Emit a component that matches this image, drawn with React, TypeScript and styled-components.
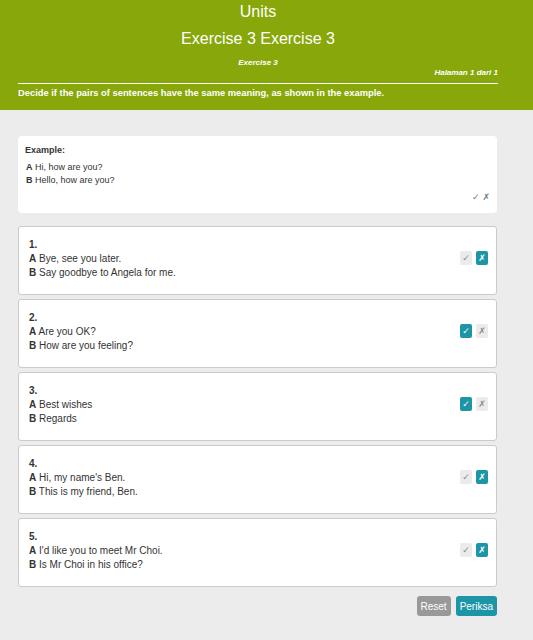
import React from "react";
import styled, { createGlobalStyle } from "styled-components";

const Global = createGlobalStyle`
  html, body { margin: 0; padding: 0; background: #ececec; }
  body { font-family: "Liberation Sans", Arial, sans-serif; color: #333; }
`;

const Page = styled.div`
  width: 533px;
  min-height: 640px;
  background: #ececec;
`;

const Header = styled.header`
  background: #87a70a;
  color: #fff;
  padding: 1px 0 11px;
`;

const HeaderInner = styled.div`
  width: 480px;
  margin-left: 18px;
  display: flex;
  flex-direction: column;
`;

const Title = styled.h1`
  margin: 0;
  font-size: 16px;
  font-weight: normal;
  line-height: 22px;
  text-align: center;
`;

const SubTitle = styled.h2`
  margin: 5px 0 0;
  font-size: 16px;
  font-weight: normal;
  line-height: 22px;
  text-align: center;
`;

const Small = styled.div<{ $align: "center" | "right"; $gap?: number }>`
  margin-top: ${(p) => p.$gap ?? 0}px;
  font-size: 8px;
  font-weight: bold;
  font-style: italic;
  line-height: 10px;
  text-align: ${(p) => p.$align};
`;

const Rule = styled.hr`
  margin: 5px 0 0;
  border: 0;
  height: 1px;
  background: #fff;
`;

const Instruction = styled.p`
  margin: 3px 0 0;
  font-size: 9.35px;
  font-weight: bold;
  line-height: 12px;
`;

const Main = styled.main`
  width: 479px;
  margin-left: 18px;
  padding-top: 26px;
  display: flex;
  flex-direction: column;
`;

const ExampleCard = styled.section`
  background: #fff;
  border-radius: 4px;
  padding: 8px 7px 10px;
  display: flex;
  flex-direction: column;
`;

const ExampleLabel = styled.div`
  font-size: 9px;
  font-weight: bold;
  line-height: 12px;
  margin-bottom: 5px;
`;

const ExampleLine = styled.div`
  font-size: 9px;
  line-height: 13px;
  padding-left: 1px;
`;

const ExampleMarks = styled.div`
  margin-top: 4px;
  display: flex;
  justify-content: flex-end;
  gap: 3px;
  font-family: "DejaVu Sans", sans-serif;
  font-size: 9px;
  line-height: 12px;
  color: #6a7a8a;
`;

const List = styled.div`
  margin-top: 13px;
  display: flex;
  flex-direction: column;
  gap: 4px;
`;

const Card = styled.div`
  height: 69px;
  box-sizing: border-box;
  background: #fff;
  border: 1px solid #cbcbcb;
  border-radius: 3px;
  padding: 11px 8px 14px 10px;
  display: flex;
  align-items: center;
  justify-content: space-between;
`;

const Text = styled.div`
  font-size: 10px;
  line-height: 14px;
  align-self: flex-start;
`;

const Num = styled.div`
  font-weight: bold;
`;

const Choices = styled.div`
  display: flex;
  gap: 4px;
  margin-top: -2px;
`;

const Mark = styled.span<{ $on: boolean }>`
  width: 12px;
  height: 14px;
  border-radius: 2px;
  display: flex;
  align-items: center;
  justify-content: center;
  font-family: "DejaVu Sans", sans-serif;
  font-size: 9px;
  background: ${(p) => (p.$on ? "#1c95a6" : "#ebebeb")};
  color: ${(p) => (p.$on ? "#fff" : "#8a8a8a")};
`;

const Actions = styled.div`
  margin-top: 9px;
  display: flex;
  justify-content: flex-end;
  gap: 5px;
`;

const Button = styled.button<{ $primary?: boolean }>`
  height: 20px;
  padding: 0 4px;
  border: 0;
  border-radius: 3px;
  font-family: "Liberation Sans", Arial, sans-serif;
  font-size: 10px;
  color: #fff;
  background: ${(p) => (p.$primary ? "#1c95a6" : "#999")};
`;

const items = [
  { a: "Bye, see you later.", b: "Say goodbye to Angela for me.", ok: false },
  { a: "Are you OK?", b: "How are you feeling?", ok: true },
  { a: "Best wishes", b: "Regards", ok: true },
  { a: "Hi, my name's Ben.", b: "This is my friend, Ben.", ok: false },
  { a: "I'd like you to meet Mr Choi.", b: "Is Mr Choi in his office?", ok: false },
];

export default function App() {
  return (
    <Page>
      <Global />
      <Header>
        <HeaderInner>
          <Title>Units</Title>
          <SubTitle>Exercise 3 Exercise 3</SubTitle>
          <Small $align="center" $gap={8}>Exercise 3</Small>
          <Small $align="right">Halaman 1 dari 1</Small>
          <Rule />
          <Instruction>Decide if the pairs of sentences have the same meaning, as shown in the example.</Instruction>
        </HeaderInner>
      </Header>
      <Main>
        <ExampleCard>
          <ExampleLabel>Example:</ExampleLabel>
          <ExampleLine><b>A</b> Hi, how are you?</ExampleLine>
          <ExampleLine><b>B</b> Hello, how are you?</ExampleLine>
          <ExampleMarks><span>✓</span><span>✗</span></ExampleMarks>
        </ExampleCard>
        <List>
          {items.map((it, i) => (
            <Card key={i}>
              <Text>
                <Num>{i + 1}.</Num>
                <div><b>A</b> {it.a}</div>
                <div><b>B</b> {it.b}</div>
              </Text>
              <Choices>
                <Mark $on={it.ok}>✓</Mark>
                <Mark $on={!it.ok}>✗</Mark>
              </Choices>
            </Card>
          ))}
        </List>
        <Actions>
          <Button>Reset</Button>
          <Button $primary>Periksa</Button>
        </Actions>
      </Main>
    </Page>
  );
}
